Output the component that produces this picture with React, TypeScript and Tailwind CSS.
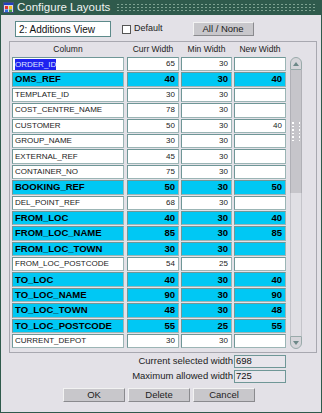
import React from 'react';

type Row = { name: string; curr: string; min: string; next: string; on?: boolean };

const ROWS: Row[] = [
  { name: 'ORDER_ID', curr: '65', min: '30', next: '' },
  { name: 'OMS_REF', curr: '40', min: '30', next: '40', on: true },
  { name: 'TEMPLATE_ID', curr: '30', min: '30', next: '' },
  { name: 'COST_CENTRE_NAME', curr: '78', min: '30', next: '' },
  { name: 'CUSTOMER', curr: '50', min: '30', next: '40' },
  { name: 'GROUP_NAME', curr: '30', min: '30', next: '' },
  { name: 'EXTERNAL_REF', curr: '45', min: '30', next: '' },
  { name: 'CONTAINER_NO', curr: '75', min: '30', next: '' },
  { name: 'BOOKING_REF', curr: '50', min: '30', next: '50', on: true },
  { name: 'DEL_POINT_REF', curr: '68', min: '30', next: '' },
  { name: 'FROM_LOC', curr: '40', min: '30', next: '40', on: true },
  { name: 'FROM_LOC_NAME', curr: '85', min: '30', next: '85', on: true },
  { name: 'FROM_LOC_TOWN', curr: '30', min: '30', next: '', on: true },
  { name: 'FROM_LOC_POSTCODE', curr: '54', min: '25', next: '' },
  { name: 'TO_LOC', curr: '40', min: '30', next: '40', on: true },
  { name: 'TO_LOC_NAME', curr: '90', min: '30', next: '90', on: true },
  { name: 'TO_LOC_TOWN', curr: '48', min: '30', next: '48', on: true },
  { name: 'TO_LOC_POSTCODE', curr: '55', min: '25', next: '55', on: true },
  { name: 'CURRENT_DEPOT', curr: '30', min: '30', next: '' },
];

function Cell({ on, w, right, children }: { on?: boolean; w: string; right?: boolean; children?: React.ReactNode }) {
  return (
    <div
      className={`${w} h-full flex items-center border border-[#9bb5b5] border-t-[#6f9797] border-l-[#6f9797] overflow-hidden whitespace-nowrap ${
        on ? 'bg-[#00c8f4] text-black font-bold text-[9.5px]' : 'bg-white text-[#222] text-[8px]'
      } ${right ? 'justify-end pr-[3px]' : 'pl-[2px]'}`}
    >
      {children}
    </div>
  );
}

function Btn({ w, children }: { w: string; children: React.ReactNode }) {
  return (
    <div className={`${w} h-[14px] flex items-center justify-center bg-[#c8c7cb] border border-[#f2f2f2] border-b-[#8a8a8e] border-r-[#8a8a8e] text-[9.5px] text-[#222]`}>
      {children}
    </div>
  );
}

export default function App() {
  return (
    <div className="w-[322px] h-[413px] flex flex-col bg-[#e3e1e7] border-x border-b border-[#2f5a4c] overflow-hidden font-['Liberation_Sans',Arial,sans-serif]">
      {/* title bar */}
      <div className="h-[15px] shrink-0 flex items-center bg-[#2f5a4c] pl-[2px] pr-[4px]">
        <svg width="11" height="11" viewBox="0 0 11 11">
          <rect x="0.5" y="0.5" width="10" height="10" fill="#d8d8e8" stroke="#405080" />
          <rect x="1" y="1" width="9" height="2" fill="#2040c0" />
          <rect x="2" y="4" width="3" height="3" fill="#e03030" />
          <rect x="6" y="4" width="3" height="3" fill="#f0c020" />
          <rect x="2" y="7.5" width="3" height="2.5" fill="#3070e0" />
          <rect x="6" y="7.5" width="3" height="2.5" fill="#40a040" />
        </svg>
        <span className="ml-[3px] text-[11.5px] text-[#eef2f0]">Configure Layouts</span>
        <div className="ml-[6px] flex-1 h-[9px] bg-[radial-gradient(circle,#7fa292_0.7px,transparent_1px)] bg-[length:4px_3px]" />
      </div>

      {/* layout selector row */}
      <div className="h-[16px] mt-[6px] flex items-center">
        <div className="ml-[14px] w-[96px] h-[16px] bg-white border border-[#5d8a8a] flex items-center pl-[3px] text-[10px] text-[#111]">
          2: Additions View
        </div>
        <div className="ml-[11px] w-[9px] h-[9px] bg-white border border-[#555]" />
        <span className="ml-[3px] text-[9px] text-[#222]">Default</span>
        <div className="ml-[30px]">
          <Btn w="w-[61px]">All / None</Btn>
        </div>
      </div>

      {/* table panel */}
      <div className="mt-[4px] ml-[8px] w-[308px] h-[312px] border border-[#a8a8b0] flex flex-col">
        <div className="h-[15px] flex items-end pb-[1px] text-[8.5px] text-[#222]">
          <div className="ml-[2px] w-[112px] text-center">Column</div>
          <div className="ml-[3px] w-[52px] text-center">Curr Width</div>
          <div className="ml-[2px] w-[51px] text-center">Min Width</div>
          <div className="ml-[2px] w-[52px] text-center">New Width</div>
        </div>
        <div className="flex">
          <div className="ml-[2px] flex flex-col gap-[1px]">
            {ROWS.map((r, i) => (
              <div key={r.name} className="h-[14.4px] flex">
                <Cell on={r.on} w="w-[112px]">
                  {i === 0 ? <span className="bg-[#1e22f0] text-[#dfe6ff] leading-[11px]">{r.name}</span> : r.name}
                </Cell>
                <div className="w-[3px]" />
                <Cell on={r.on} w="w-[52px]" right>{r.curr}</Cell>
                <div className="w-[2px]" />
                <Cell on={r.on} w="w-[51px]" right>{r.min}</Cell>
                <div className="w-[2px]" />
                <Cell on={r.on} w="w-[52px]" right>{r.next}</Cell>
              </div>
            ))}
          </div>
          {/* scrollbar */}
          <div className="ml-[4px] w-[12px] flex flex-col">
            <div className="h-[13px] rounded-t-[6px] bg-[#d6d5da] border border-[#9aa] flex items-center justify-center">
              <svg width="6" height="4" viewBox="0 0 6 4"><path d="M0 4 L3 0 L6 4 Z" fill="#6d8888" /></svg>
            </div>
            <div className="h-[123px] bg-[#c6c5ca] border-x border-[#b0b0b6] flex flex-col items-center justify-center gap-[2px]">
              {[0, 1, 2, 3, 4, 5].map((k) => (
                <div key={k} className="w-[8px] flex justify-between">
                  <div className="w-[1.5px] h-[1.5px] bg-white" />
                  <div className="w-[1.5px] h-[1.5px] bg-white" />
                </div>
              ))}
            </div>
            <div className="h-[143px] bg-[#e0dfe4] border-x border-[#c4c4ca]" />
            <div className="h-[13px] rounded-b-[6px] bg-[#d6d5da] border border-[#9aa] flex items-center justify-center">
              <svg width="6" height="4" viewBox="0 0 6 4"><path d="M0 0 L3 4 L6 0 Z" fill="#6d8888" /></svg>
            </div>
          </div>
        </div>
      </div>

      {/* footer */}
      <div className="mt-[2px] flex flex-col items-end pr-[35px] gap-[2px] text-[9.5px] text-[#222]">
        <div className="flex items-center h-[13px]">
          <span className="mr-[1px]">Current selected width</span>
          <div className="w-[52px] h-[13px] bg-[#e8e6ec] border border-[#6f9797] pl-[1px] flex items-center text-[9.5px] text-[#111]">698</div>
        </div>
        <div className="flex items-center h-[13px]">
          <span className="mr-[1px]">Maximum allowed width</span>
          <div className="w-[52px] h-[13px] bg-[#e8e6ec] border border-[#6f9797] pl-[1px] flex items-center text-[9.5px] text-[#111]">725</div>
        </div>
      </div>
      <div className="mt-[5px] ml-[62px] flex gap-[3px]">
        <Btn w="w-[62px]">OK</Btn>
        <Btn w="w-[62px]">Delete</Btn>
        <Btn w="w-[62px]">Cancel</Btn>
      </div>
    </div>
  );
}
